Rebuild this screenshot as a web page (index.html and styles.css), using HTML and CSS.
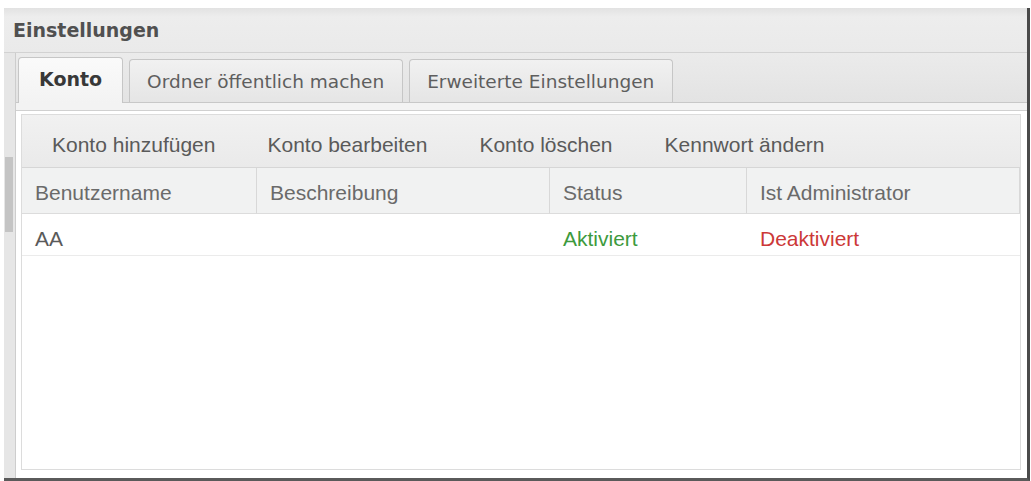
FILE: index.html
```html
<!DOCTYPE html>
<html lang="de">
<head>
    <meta charset="UTF-8">
    <meta name="viewport" content="width=device-width, initial-scale=1.0">
    <title>Einstellungen</title>
    <link rel="stylesheet" href="styles.css">
</head>
<body>

    <div class="window">
        <div class="title-bar">Einstellungen</div>

        <div class="main">
            <div class="scroll"><div class="thumb"></div></div>

            <div class="tab-panel">
                <div class="tabs">
                    <div class="tab active">Konto</div>
                    <div class="tab">Ordner öffentlich machen</div>
                    <div class="tab">Erweiterte Einstellungen</div>
                </div>
                <div class="tab-band"></div>

                <div class="content">
                    <div class="grid-box">
                        <div class="toolbar">
                            <button>Konto hinzufügen</button>
                            <button>Konto bearbeiten</button>
                            <button>Konto löschen</button>
                            <button>Kennwort ändern</button>
                        </div>

                        <div class="grid">
                            <div class="head">Benutzername</div>
                            <div class="head">Beschreibung</div>
                            <div class="head">Status</div>
                            <div class="head">Ist Administrator</div>

                            <div class="cell">AA</div>
                            <div class="cell"></div>
                            <div class="cell on">Aktiviert</div>
                            <div class="cell off">Deaktiviert</div>
                        </div>
                    </div>
                </div>
            </div>
        </div>
    </div>

</body>
</html>
```

FILE: styles.css
```css
/* Fenster "Einstellungen" */
* {
    box-sizing: border-box;
}

body {
    margin: 0;
    background: #fff;
    font-family: "Liberation Sans", Arial, sans-serif;
}

.window {
    margin: 8px 0 0 4px;
    width: 1026px;
    height: 473px;
    display: flex;
    flex-direction: column;
    border-right: 3px solid #4a4a4a;
    border-bottom: 3px solid #5a5a5a;
    background: #fff;
}

.title-bar {
    height: 45px;
    padding: 0 0 0 9px;
    line-height: 44px;
    font-family: "DejaVu Sans", sans-serif;
    font-weight: bold;
    font-size: 19px;
    color: #505050;
    background: linear-gradient(#e2e2e2, #ededed 20%, #eaeaea);
    border-bottom: 1px solid #d2d2d2;
}

.main {
    flex: 1;
    display: flex;
}

/* Bildlaufleiste links */
.scroll {
    width: 12px;
    background: #e6e6e6;
    border-right: 1px solid #cdcdcd;
}

.thumb {
    margin: 104px 0 0 1px;
    width: 8px;
    height: 75px;
    background: #c4c4c4;
}

.tab-panel {
    flex: 1;
    display: flex;
    flex-direction: column;
}

/* Reiter */
.tabs {
    height: 50px;
    display: flex;
    align-items: flex-end;
    gap: 6px;
    padding: 0 0 0 2px;
    background: linear-gradient(#ebebeb, #e3e3e3);
    border-bottom: 1px solid #c8c8c8;
}

.tab {
    height: 43px;
    display: flex;
    align-items: center;
    padding: 0 18px 0 17px;
    font-family: "DejaVu Sans", sans-serif;
    font-size: 18.5px;
    color: #5e5e5e;
    border: 1px solid #c6c6c6;
    border-bottom: none;
    border-radius: 4px 4px 0 0;
    background: linear-gradient(#f1f1f1, #e5e5e5);
}

.tab.active {
    height: 46px;
    margin-bottom: -1px;
    padding: 0 20px 3px;
    font-weight: bold;
    font-size: 19px;
    color: #383838;
    background: linear-gradient(#fafafa, #f3f3f3);
}

.tab-band {
    height: 8px;
    background: #f3f3f3;
    border-bottom: 1px solid #d0d0d0;
}

.content {
    flex: 1;
    display: flex;
    flex-direction: column;
    padding: 3px 6px 8px 5px;
    background: #fff;
}

.grid-box {
    flex: 1;
    border: 1px solid #dcdcdc;
    background: #fff;
}

/* Werkzeugleiste */
.toolbar {
    height: 53px;
    display: flex;
    padding-left: 4px;
    background: linear-gradient(#f1f1f1, #eaeaea);
    border-bottom: 1px solid #d6d6d6;
}

.toolbar button {
    padding: 7px 26px 0;
    border: none;
    background: none;
    font-family: "Liberation Sans", Arial, sans-serif;
    font-size: 21px;
    color: #5a5a5a;
    cursor: pointer;
}

/* Kontenliste */
.grid {
    display: grid;
    grid-template-columns: 235px 293px 197px 1fr;
    font-size: 21px;
}

.head {
    height: 46px;
    padding: 5px 0 0 13px;
    display: flex;
    align-items: center;
    color: #6a6a6a;
    background: #f1f2f2;
    border-right: 1px solid #d8d8d8;
    border-bottom: 1px solid #dcdcdc;
}

.cell {
    height: 42px;
    padding: 9px 0 0 13px;
    display: flex;
    align-items: center;
    color: #5a5a5a;
    border-bottom: 1px solid #ebebeb;
}

.cell.on {
    color: #3d9a3d;
}

.cell.off {
    color: #cc3838;
}
```
